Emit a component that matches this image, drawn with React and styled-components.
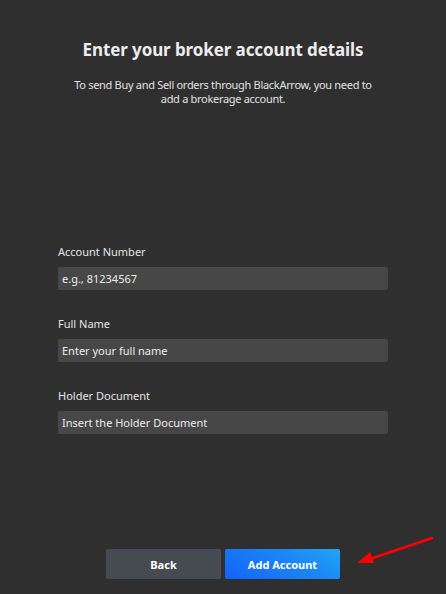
import React from "react";
import styled, { createGlobalStyle } from "styled-components";

const Global = createGlobalStyle`
  html, body { margin: 0; padding: 0; background: #2f2f2f; }
  * { box-sizing: border-box; }
`;

const Page = styled.div`
  position: relative;
  width: 446px;
  height: 594px;
  background: #2f2f2f;
  font-family: "Noto Sans", "Open Sans", sans-serif;
  color: #e8e8e8;
  display: flex;
  flex-direction: column;
  align-items: center;
  overflow: hidden;
`;

const Title = styled.h1`
  margin: 38px 0 0;
  font-size: 17px;
  font-weight: 700;
  line-height: 24px;
  color: #ececec;
  letter-spacing: -0.1px;
`;

const Subtitle = styled.p`
  margin: 16px 0 0;
  font-size: 11px;
  line-height: 14px;
  text-align: center;
  color: #e2e2e2;
  width: 310px;
  letter-spacing: -0.3px;
`;

const Form = styled.div`
  width: 330px;
  margin-top: 139px;
  display: flex;
  flex-direction: column;
  gap: 27px;
`;

const Field = styled.div`
  display: flex;
  flex-direction: column;
  gap: 8px;
`;

const Label = styled.label`
  font-size: 11px;
  line-height: 14px;
  color: #e4e4e4;
`;

const Input = styled.div`
  height: 23px;
  background: #474747;
  border-radius: 2px;
  padding: 0 4px;
  display: flex;
  align-items: center;
  font-size: 11px;
  color: #ececec;
`;

const Footer = styled.div`
  margin-top: auto;
  margin-bottom: 15px;
  display: flex;
  gap: 4px;
`;

const Button = styled.button`
  width: 115px;
  height: 30px;
  border: none;
  border-radius: 2px;
  font-family: inherit;
  font-size: 11px;
  font-weight: 700;
  color: #fff;
  background: ${(p) =>
    p.$primary
      ? "linear-gradient(30deg, #1463f7 0%, #1b86f6 60%, #22a4f5 100%)"
      : "#464b52"};
`;

const Arrow = styled.svg`
  position: absolute;
  left: 350px;
  top: 532px;
`;

export default function App() {
  return (
    <>
      <Global />
      <Page>
        <Title>Enter your broker account details</Title>
        <Subtitle>
          To send Buy and Sell orders through BlackArrow, you need to add a
          brokerage account.
        </Subtitle>
        <Form>
          <Field>
            <Label>Account Number</Label>
            <Input>e.g., 81234567</Input>
          </Field>
          <Field>
            <Label>Full Name</Label>
            <Input>Enter your full name</Input>
          </Field>
          <Field>
            <Label>Holder Document</Label>
            <Input>Insert the Holder Document</Input>
          </Field>
        </Form>
        <Footer>
          <Button>Back</Button>
          <Button $primary>Add Account</Button>
        </Footer>
        <Arrow width="90" height="40" viewBox="0 0 90 40">
          <line x1="82" y1="6" x2="20" y2="27" stroke="#f00" strokeWidth="2.5" strokeLinecap="round" />
          <polygon points="7,31 20,20 24,31" fill="#f00" />
        </Arrow>
      </Page>
    </>
  );
}
